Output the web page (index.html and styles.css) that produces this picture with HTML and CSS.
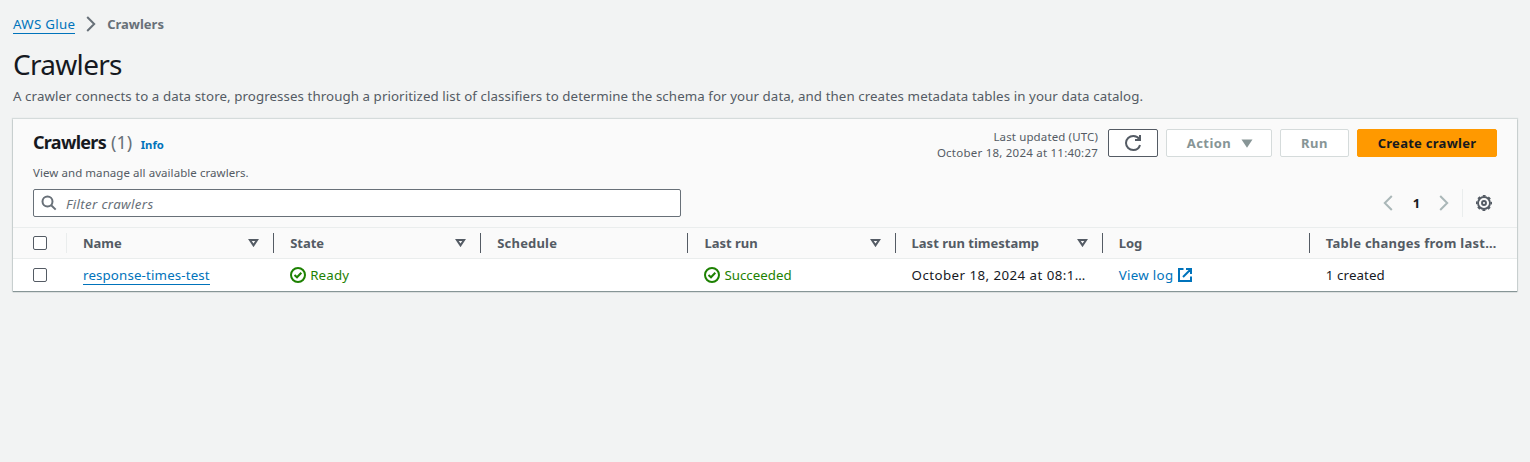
FILE: index.html
```html
<!DOCTYPE html>
<html lang="en">
<head>
<meta charset="utf-8">
<title>Crawlers</title>
<link rel="stylesheet" href="styles.css">
</head>
<body>
<nav class="breadcrumbs">
  <a class="crumb-link">AWS Glue</a>
  <svg class="crumb-sep" width="10" height="16" viewBox="0 0 10 16"><path d="M1.200 1 8.200 8l-7 7" fill="none" stroke="#687078" stroke-width="2"/></svg>
  <span class="crumb-current">Crawlers</span>
</nav>
<h1 class="page-title">Crawlers</h1>
<p class="page-desc">A crawler connects to a data store, progresses through a prioritized list of classifiers to determine the schema for your data, and then creates metadata tables in your data catalog.</p>
<section class="panel">
  <header class="panel-header">
    <div class="title-row">
      <h2 class="panel-title">Crawlers</h2>
      <span class="counter">(1)</span>
      <a class="info">Info</a>
      <div class="actions">
        <div class="updated"><span class="upd-label">Last updated (UTC)</span><span class="upd-time">October 18, 2024 at 11:40:27</span></div>
        <button class="btn btn-refresh" aria-label="Refresh"><svg width="16" height="16" viewBox="0 0 16 16" fill="none" stroke="#545b64" stroke-width="2"><path d="M15 10c-.8 2.900-3.500 5-6.700 5C4.300 15 1 11.900 1 8s3.300-7 7.300-7c2.600 0 4.900 1.300 6.200 3.300"/><path d="M10 5h5V0"/></svg></button>
        <button class="btn btn-disabled btn-action">Action<svg width="12" height="9" viewBox="0 0 12 9"><path d="M0.500 0.500h11L6 8.700z" fill="#879596"/></svg></button>
        <button class="btn btn-disabled btn-run">Run</button>
        <button class="btn btn-primary">Create crawler</button>
      </div>
    </div>
    <p class="panel-desc">View and manage all available crawlers.</p>
    <div class="tools">
      <div class="search">
        <svg width="16" height="16" viewBox="0 0 16 16" fill="none" stroke="#687078" stroke-width="2"><circle cx="6.500" cy="6.500" r="5"/><path d="m10.200 10.200 4.500 4.400"/></svg>
        <span class="placeholder">Filter crawlers</span>
      </div>
      <div class="pager">
        <svg width="10" height="16" viewBox="0 0 10 16"><path d="M8.800 1 1.800 8l7 7" fill="none" stroke="#aab7b8" stroke-width="2"/></svg>
        <span class="page-no">1</span>
        <svg width="10" height="16" viewBox="0 0 10 16"><path d="M1.200 1 8.200 8l-7 7" fill="none" stroke="#aab7b8" stroke-width="2"/></svg>
        <span class="pager-rule"></span>
        <svg width="16" height="16" viewBox="0 0 16 16" fill="none" stroke="#545b64"><circle cx="8" cy="8" r="6" stroke-width="1.900"/><circle cx="8" cy="8" r="7.300" stroke-width="1.500" stroke-dasharray="2.867 2.867" stroke-dashoffset="1.430"/><circle cx="8" cy="8" r="2" stroke-width="1.900"/></svg>
      </div>
    </div>
  </header>
  <div class="row head">
    <div class="cell select"><span class="checkbox"></span></div>
    <div class="cell">Name<svg class="sort" width="11" height="8" viewBox="0 0 11 8"><path d="M1.900 1h7.200L5.500 6.400z"/></svg></div>
    <div class="cell">State<svg class="sort" width="11" height="8" viewBox="0 0 11 8"><path d="M1.900 1h7.200L5.500 6.400z"/></svg></div>
    <div class="cell schedule">Schedule</div>
    <div class="cell">Last run<svg class="sort" width="11" height="8" viewBox="0 0 11 8"><path d="M1.900 1h7.200L5.500 6.400z"/></svg></div>
    <div class="cell">Last run timestamp<svg class="sort" width="11" height="8" viewBox="0 0 11 8"><path d="M1.900 1h7.200L5.500 6.400z"/></svg></div>
    <div class="cell">Log</div>
    <div class="cell changes">Table changes from last…</div>
  </div>
  <div class="row body">
    <div class="cell select"><span class="checkbox"></span></div>
    <div class="cell"><a class="name-link">response-times-test</a></div>
    <div class="cell status"><svg width="16" height="16" viewBox="0 0 16 16" fill="none" stroke="#1d8102" stroke-width="2"><circle cx="8" cy="8" r="7"/><path d="m4.500 8 2.500 2.300 4.300-4.600"/></svg><span class="ready">Ready</span></div>
    <div class="cell"></div>
    <div class="cell status"><svg width="16" height="16" viewBox="0 0 16 16" fill="none" stroke="#1d8102" stroke-width="2"><circle cx="8" cy="8" r="7"/><path d="m4.500 8 2.500 2.300 4.300-4.600"/></svg><span>Succeeded</span></div>
    <div class="cell timestamp">October 18, 2024 at 08:1…</div>
    <div class="cell log"><a>View log</a><svg width="16" height="16" viewBox="0 0 16 16" fill="none" stroke="#0073bb" stroke-width="2"><path d="M6.500 2H2v12h12V9.500M9 2h5v5M14 2 6 10"/></svg></div>
    <div class="cell created">1 created</div>
  </div>
</section>
</body>
</html>
```

FILE: styles.css
```css
* { box-sizing: border-box; }
body { margin: 0; height: 462px; padding: 14px 13px 0; background: #f2f3f3; color: #16191f; font: 13.3px/20px "Noto Sans", sans-serif; overflow: hidden; }
h1, h2, p { margin: 0; font-weight: 400; }
svg { flex: none; display: block; }
.breadcrumbs { display: flex; align-items: center; height: 20px; }
.crumb-link { height: 20px; color: #0073bb; border-bottom: 1px solid #0073bb; letter-spacing: 0.28px; }
.crumb-sep { margin: 0 11px; }
.crumb-current { font-size: 13px; font-weight: 700; color: #687078; }
.page-title { margin-top: 12px; font-size: 28px; line-height: 36px; letter-spacing: -0.7px; }
.page-desc { margin-top: 4px; color: #545b64; white-space: nowrap; letter-spacing: 0.082px; }
.panel { margin-top: 13px; width: 1504px; background: #fff; box-shadow: 0 1px 1px #879596, 0 0 1px 1px #d5dbdb; }
.panel-header { height: 109px; padding: 10px 20px 0; background: #fafafa; border-bottom: 1px solid #eaeded; }
.title-row { display: flex; height: 28px; align-items: center; }
.panel-title { font-size: 18px; font-weight: 700; letter-spacing: -0.7px; padding-bottom: 2px; }
.counter { font-size: 18px; color: #687078; margin-left: 5px; padding-bottom: 2px; }
.info { font-size: 11.3px; font-weight: 700; color: #0073bb; margin-left: 8.500px; padding-top: 4px; }
.actions { display: flex; margin-left: auto; align-items: center; }
.updated { display: flex; flex-direction: column; align-items: flex-end; font-size: 11.5px; line-height: 16px; color: #545b64; margin: 4px 10px 0 0; }
.upd-label { letter-spacing: 0.13px; }
.upd-time { letter-spacing: 0.23px; }
.btn { height: 28px; border: 1px solid #545b64; border-radius: 2px; background: #fff; font: 700 13px/20px "Noto Sans", sans-serif; display: flex; align-items: center; justify-content: center; padding: 0; white-space: nowrap; }
.btn-refresh { width: 50px; }
.btn-disabled { border-color: #d5dbdb; color: #879596; margin-left: 8px; letter-spacing: 0.45px; }
.btn-action { width: 106px; gap: 10px; padding-left: 2px; }
.btn-run { width: 69px; }
.btn-primary { width: 140px; margin-left: 8px; background: #ff9900; border-color: #ff9900; color: #16191f; letter-spacing: 0.27px; }
.panel-desc { font-size: 11.5px; line-height: 16px; margin-top: 8px; color: #545b64; letter-spacing: 0.06px; }
.tools { display: flex; justify-content: space-between; margin-top: 8px; }
.search { display: flex; width: 648px; height: 28px; border: 1px solid #687078; border-radius: 2px; background: #fff; align-items: center; padding-left: 7px; gap: 9px; }
.placeholder { font-style: italic; color: #687078; letter-spacing: 0.35px; padding-top: 2px; }
.pager { display: flex; align-items: center; padding-right: 5px; }
.page-no { font-size: 13px; font-weight: 700; width: 46px; padding-left: 1px; text-align: center; }
.pager-rule { width: 1px; height: 28px; background: #eaeded; margin: 0 13px; }
.row { display: grid; grid-template-columns: 54px repeat(6, 207.15px) 1fr; height: 31px; }
.head { background: #fafafa; border-bottom: 1px solid #eaeded; color: #545b64; font-size: 13px; font-weight: 700; }
.body { height: 32px; }
.cell { display: flex; align-items: center; padding-left: 16px; white-space: nowrap; }
.head .cell { position: relative; }
.head .cell:not(:last-child)::after { content: ""; position: absolute; right: 0; top: 5px; width: 1px; height: 20px; background: #545b64; }
.head .select::after { background: #eaeded !important; }
.cell.select { padding-left: 20px; }
.checkbox { width: 14px; height: 14px; border: 1px solid #545b64; border-radius: 2px; background: #fff; }
.sort { margin-left: auto; margin-right: 14.8px; fill: none; stroke: #545b64; stroke-width: 2; }
.schedule { letter-spacing: 0.18px; }
.changes { letter-spacing: 0.26px; }
.name-link { height: 20px; color: #0073bb; border-bottom: 1px solid #0073bb; letter-spacing: 0.15px; }
.status { color: #1d8102; gap: 4px; }
.ready { letter-spacing: 0.17px; }
.timestamp { letter-spacing: 0.45px; }
.log { color: #0073bb; gap: 3.500px; letter-spacing: 0.32px; }
.created { letter-spacing: 0.1px; }
```
